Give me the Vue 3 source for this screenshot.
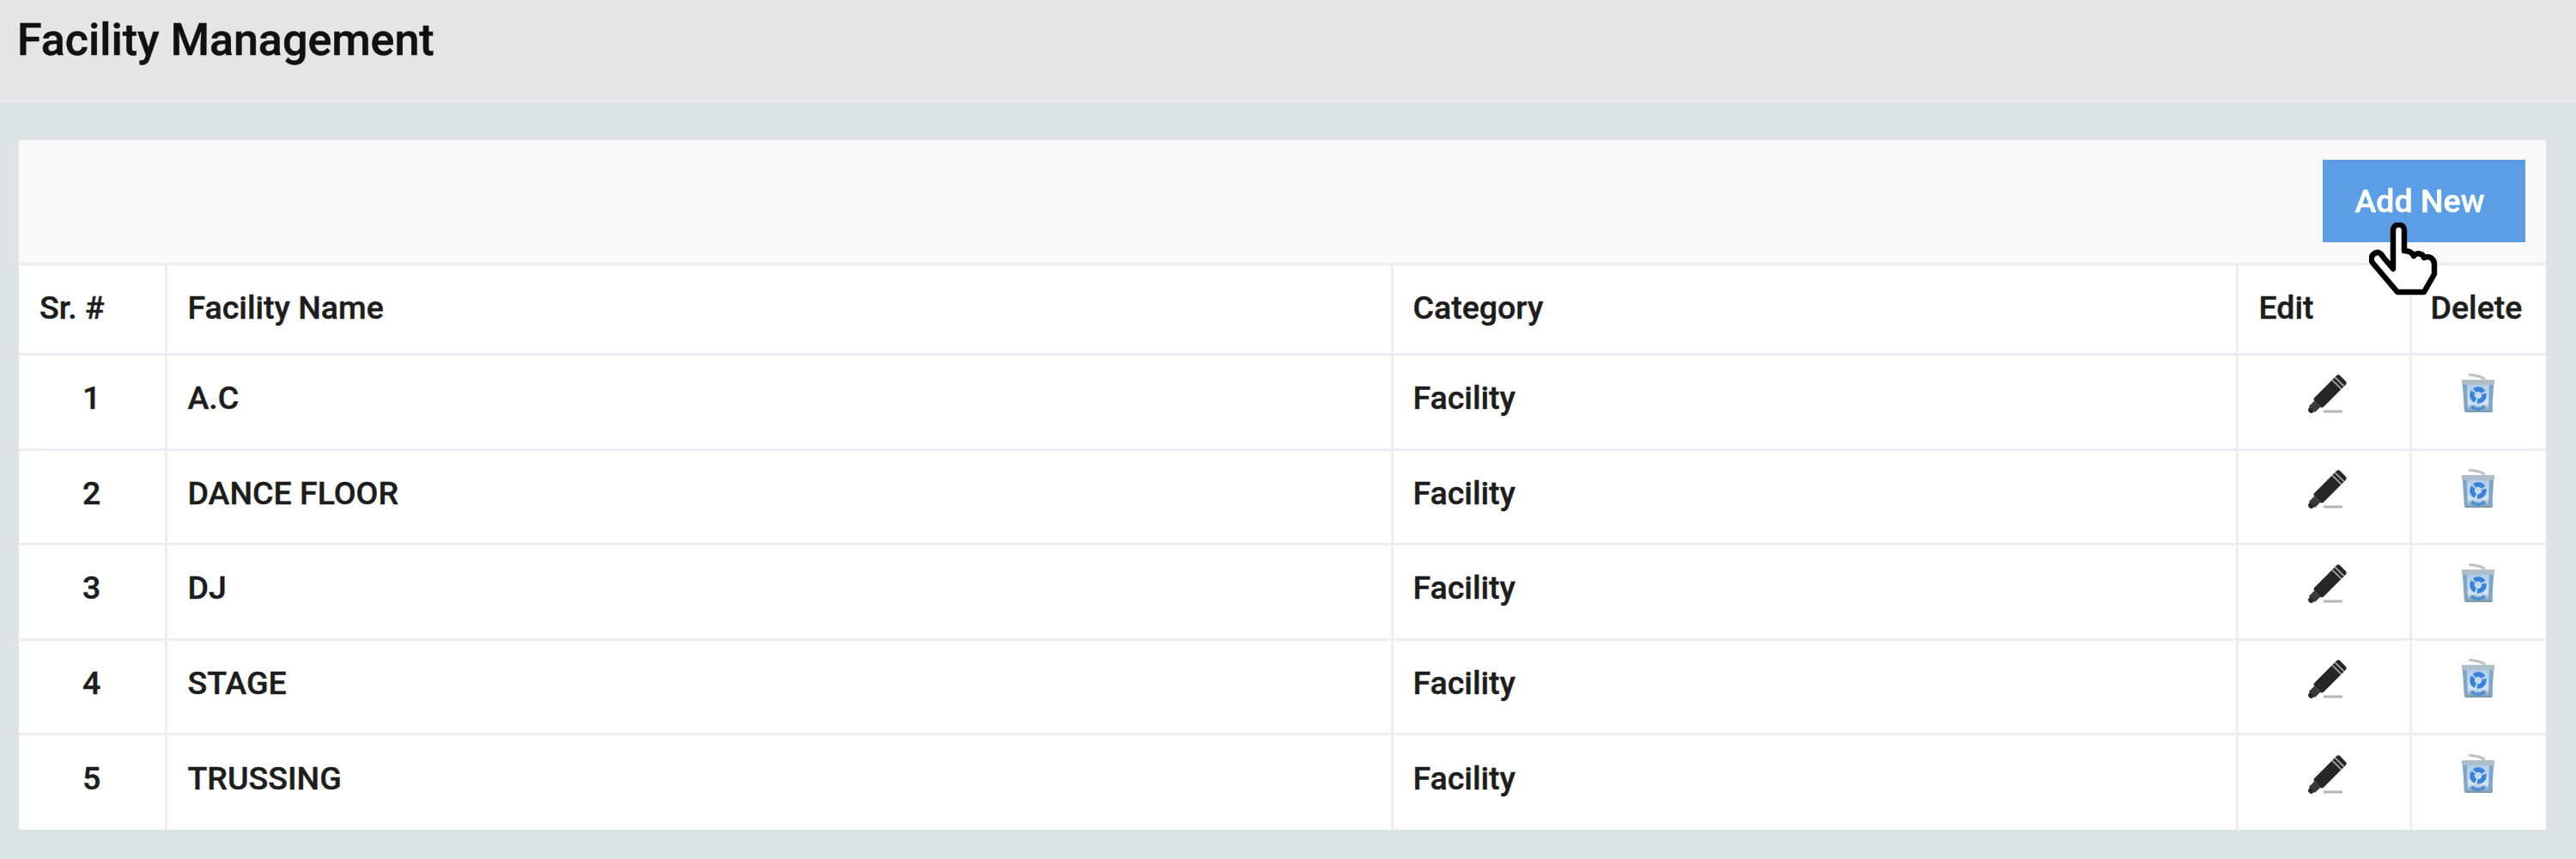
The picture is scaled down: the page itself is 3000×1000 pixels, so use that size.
<script setup>
const facilities = [
  { id: 1, name: 'A.C', category: 'Facility' },
  { id: 2, name: 'DANCE FLOOR', category: 'Facility' },
  { id: 3, name: 'DJ', category: 'Facility' },
  { id: 4, name: 'STAGE', category: 'Facility' },
  { id: 5, name: 'TRUSSING', category: 'Facility' }
];
</script>

<template>
  <div class="page">
    <header class="title-bar">
      <h1>Facility Management</h1>
    </header>

    <section class="card">
      <div class="toolbar">
        <button class="add-btn">Add New</button>
        <svg class="cursor" viewBox="0 0 80 88" width="80" height="88">
          <path d="M28 54V9a6.500 6.500 0 0 1 13 0V33C45 33 50 34 52 39C55 35 62 35 64 41C70 38 76 42 76 49V60L64 81H33L5 48C0 42 4 36 9 35C13 34 15 38 17 41Z" fill="#fff" stroke="#000" stroke-width="6.500" stroke-linejoin="round" />
        </svg>
      </div>

      <table>
        <colgroup>
          <col class="c-sr" />
          <col class="c-name" />
          <col class="c-cat" />
          <col class="c-edit" />
          <col class="c-del" />
        </colgroup>
        <thead>
          <tr>
            <th>Sr. #</th>
            <th>Facility Name</th>
            <th class="cat">Category</th>
            <th>Edit</th>
            <th>Delete</th>
          </tr>
        </thead>
        <tbody>
          <tr v-for="item in facilities" :key="item.id">
            <td class="center">{{ item.id }}</td>
            <td>{{ item.name }}</td>
            <td class="cat">{{ item.category }}</td>
            <td class="center">
              <svg class="icon pencil" viewBox="0 0 50 50" width="50" height="50">
                <g transform="translate(6 43) rotate(-45)">
                  <circle cx="1" cy="0" r="3.500" fill="#262626" />
                  <rect x="2" y="-5" width="9" height="10" fill="#3a3a3a" />
                  <rect x="11" y="-7.500" width="42" height="15" rx="3" fill="#262626" />
                  <path d="M43 -7.500v15M47.500 -7.500v15" stroke="#a5a5a5" stroke-width="1.800" />
                </g>
                <path d="M21 44h22" stroke="#b5b5b5" stroke-width="3" />
              </svg>
            </td>
            <td class="center">
              <svg class="icon trash" viewBox="0 0 50 50" width="50" height="50">
                <defs>
                  <linearGradient id="can" x1="0" y1="0" x2="0" y2="1">
                    <stop offset="0" stop-color="#a9c9e8" />
                    <stop offset=".7" stop-color="#d4e5f5" />
                    <stop offset="1" stop-color="#6f93a6" />
                  </linearGradient>
                </defs>
                <path d="M14 1l12 2 7 3" stroke="#bcc2c7" stroke-width="3" fill="none" />
                <path d="M7 10h36l-1 33a2 2 0 0 1-2 2H11a2 2 0 0 1-2-2z" fill="url(#can)" />
                <path d="M6 7h38v6H6z" fill="#aebecb" />
                <path d="M7 13h5l1 30h-4zM43 13h-5l-1 30h4z" fill="#7fa5c9" />
                <circle cx="25" cy="25" r="7" fill="none" stroke="#3a83dc" stroke-width="5.500" stroke-dasharray="12 2" />
                <path d="M17 38c5 4 11 4 16 0" stroke="#4f8fd4" stroke-width="4" fill="none" />
              </svg>
            </td>
          </tr>
        </tbody>
      </table>
    </section>
  </div>
</template>

<style scoped>
.page {
  min-height: 1000px;
  background: #dee3e6;
  font-family: Roboto, "Liberation Sans", sans-serif;
  color: #1d1d1d;
  padding-bottom: 37px;
  box-sizing: border-box;
}

.title-bar {
  height: 116px;
  background: #e5e5e5;
  border-bottom: 3px solid #eaeced;
  padding-left: 20px;
}

h1 {
  margin: 0;
  padding-top: 17px;
  font-size: 52px;
  line-height: 59px;
  font-weight: 500;
  color: #111;
  -webkit-text-stroke: 0.5px #111;
  filter: blur(0.5px);
}

.card {
  margin: 44px 35px 0 22px;
  background: #fff;
}

.toolbar {
  position: relative;
  height: 143px;
  background: #f9f9f9;
  display: flex;
  justify-content: flex-end;
  align-items: flex-start;
  padding: 23px 24px 0 0;
  box-sizing: border-box;
}

.add-btn {
  width: 236px;
  height: 96px;
  border: 0;
  padding: 0 10px 1px 0;
  background: #5b9ee6;
  color: #fff;
  font-family: inherit;
  font-size: 37.500px;
  font-weight: 500;
  -webkit-text-stroke: 0.5px #fff;
  filter: blur(0.5px);
}

.cursor {
  position: absolute;
  right: 126px;
  top: 96px;
  z-index: 2;
}

table {
  width: 100%;
  border-collapse: collapse;
  table-layout: fixed;
  font-size: 37.500px;
  font-weight: 500;
  -webkit-text-stroke: 0.4px #1d1d1d;
}

.c-sr { width: 171px; }
.c-cat { width: 984px; }
.c-edit { width: 202px; }
.c-del { width: 158px; }

th, td {
  border: 3px solid #eeeef2;
  text-align: left;
  padding: 0 0 9px 24px;
  height: 110.500px;
  box-sizing: border-box;
  color: #1d1d1d;
}

th {
  height: 105px;
  padding-bottom: 4px;
  font-weight: 500;
}

tr > :first-child { border-left: 0; }
tr > :last-child { border-right: 0; }
tbody tr:last-child td { border-bottom: 0; height: 111px; }

td.center {
  text-align: center;
  padding: 0 0 9px;
}

th:last-child { padding-left: 22px; }
.cat { padding-left: 23px; }

.icon {
  display: block;
  margin: -6px auto 0;
  filter: blur(0.5px);
}

.pencil { transform: translateX(4px); }
.trash { transform: translateX(-1px); }
</style>

<style>
body { background: #dee3e6; }
</style>
